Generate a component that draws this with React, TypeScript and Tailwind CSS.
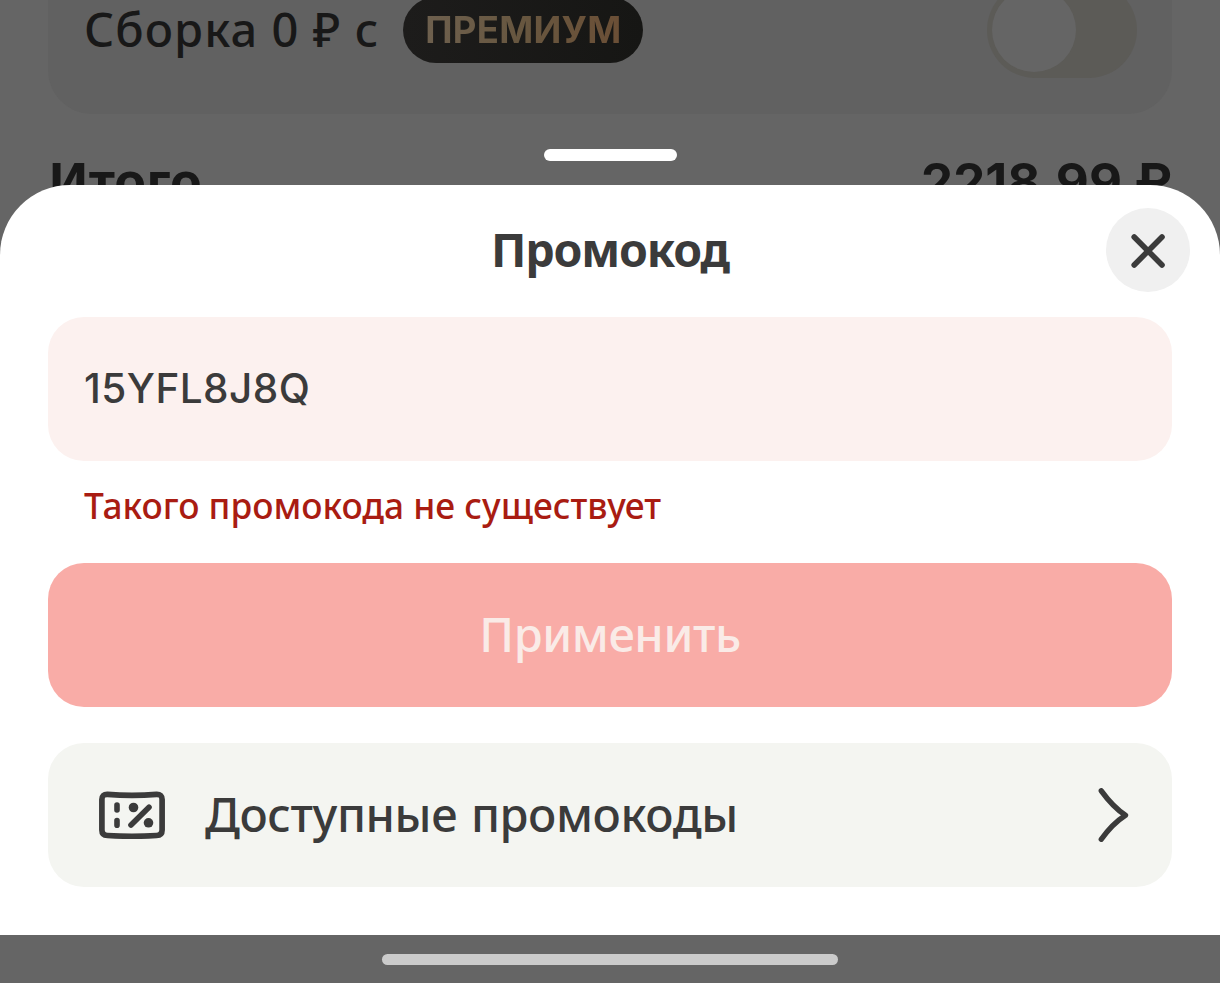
import { useState } from 'react';

function AssemblyCard() {
  return (
    <div className="mx-12 -mt-[54px] flex h-[168px] items-center justify-between rounded-[44px] bg-[#616161] pl-9 pr-[35px]">
      <div className="flex items-center">
        <span className="whitespace-pre pb-[2px] text-[47px] font-medium leading-none tracking-[1.08px] text-[#181818]">Сборка 0 ₽ с</span>
        <span className="ml-6 flex h-[66px] w-[240px] items-center justify-center rounded-full bg-linear-to-r from-[#1d1c1b] to-[#161614]">
          <span className="bg-linear-to-r from-[#6e604e] via-[#67563f] to-[#6b4f36] bg-clip-text pt-px font-['Inter',sans-serif] text-[36.5px] font-bold leading-none tracking-[0.3px] text-transparent">ПРЕМИУМ</span>
        </span>
      </div>
      <div className="flex h-24 w-[150px] items-center rounded-full bg-[#5c5b57] pl-[5px]">
        <div className="size-[84px] rounded-full bg-[#656565]" />
      </div>
    </div>
  );
}

function TotalRow() {
  return (
    <div className="mt-[31px] flex justify-between pl-12 pr-[48px] text-[52px] font-bold leading-[70px] text-[#181818]">
      <span className="tracking-[-0.4px]">Итого</span>
      <span className="pt-[2px] font-['Inter',sans-serif] text-[51px]">2218,99 ₽</span>
    </div>
  );
}

function CloseIcon() {
  return (
    <svg className="size-[84px]" viewBox="0 0 84 84" fill="none" stroke="#3b3b3b" strokeWidth="5.6" strokeLinecap="round">
      <path d="M28.2 29 56 57M56 29 28.2 57" />
    </svg>
  );
}

function TicketIcon() {
  return (
    <svg className="h-12 w-[66px]" viewBox="0 0 66 48" fill="none" stroke="#3b3b3b" strokeWidth="5.7" strokeLinecap="round" strokeLinejoin="round">
      <path d="M8.5 3.3Q33 5.4 57.5 3.3Q63.1 3.1 63.1 8.5V39Q63.1 44.3 57.5 44.5Q33 46 8.5 44.5Q2.9 44.3 2.9 39V8.5Q2.9 3.1 8.5 3.3Z" />
      <path d="M18 14V19M18 29.5V34.2M32 34 50 16.3" strokeWidth="5.6" />
      <circle cx="34.5" cy="16.5" r="4.8" fill="#3b3b3b" stroke="none" />
      <circle cx="49.5" cy="31.8" r="4.8" fill="#3b3b3b" stroke="none" />
    </svg>
  );
}

function ChevronIcon() {
  return (
    <svg className="h-[54px] w-8" viewBox="0 0 32 54" fill="none" stroke="#3b3b3b" strokeWidth="5.4" strokeLinecap="round" strokeLinejoin="round">
      <path d="M3.3 2.8Q15 19 27.5 27.2Q14 36 3.3 51.3" />
    </svg>
  );
}

export default function App() {
  const [code, setCode] = useState('15YFL8J8Q');
  return (
    <main className="relative flex h-[983px] w-[1220px] flex-col overflow-hidden bg-[#656565] font-['Noto_Sans',sans-serif] text-[#3b3b3b]">
      <div className="h-[185px] shrink-0">
        <AssemblyCard />
        <TotalRow />
      </div>
      <div className="absolute left-[544px] top-[149px] h-3 w-[133px] rounded-full bg-white" />
      <section className="relative flex h-[750px] shrink-0 flex-col rounded-t-[70px] bg-white px-12">
        <header className="grid h-[132px] grid-cols-[1fr_auto_1fr] items-center pb-[2px]">
          <h1 className="col-start-2 pb-[2px] text-[46.5px] font-bold leading-none tracking-[-1.15px]">Промокод</h1>
          <button aria-label="Закрыть" className="-mr-[18px] size-[84px] justify-self-end rounded-full bg-[#f0f0f0]"><CloseIcon /></button>
        </header>
        <input value={code} onChange={(e) => setCode(e.target.value)} className="h-36 w-full rounded-[36px] bg-[#fcf1ef] px-9 pb-[2px] font-['Inter',sans-serif] text-[40.5px] font-medium tracking-[0.45px] outline-none" />
        <p className="mt-[17px] h-[54px] whitespace-nowrap pl-9 text-[35.3px] font-medium leading-[54px] text-[#a91c12]">Такого промокода не существует</p>
        <button className="mt-[31px] h-36 w-full rounded-[36px] bg-[#f9aca7] pb-[2px] text-[47px] font-medium tracking-[-0.4px] text-[#faebe7]">Применить</button>
        <button className="mt-9 flex h-36 w-full items-center rounded-[36px] bg-[#f4f5f1] pl-[51px] pr-[42px] text-left">
          <TicketIcon />
          <span className="ml-10 grow pb-[2px] text-[47px] font-medium leading-none tracking-[-0.42px] [word-spacing:2px]">Доступные промокоды</span>
          <ChevronIcon />
        </button>
      </section>
      <footer className="flex h-12 shrink-0 items-center justify-center">
        <div className="h-[11px] w-[456px] rounded-full bg-[#cbcbcb]" />
      </footer>
    </main>
  );
}
